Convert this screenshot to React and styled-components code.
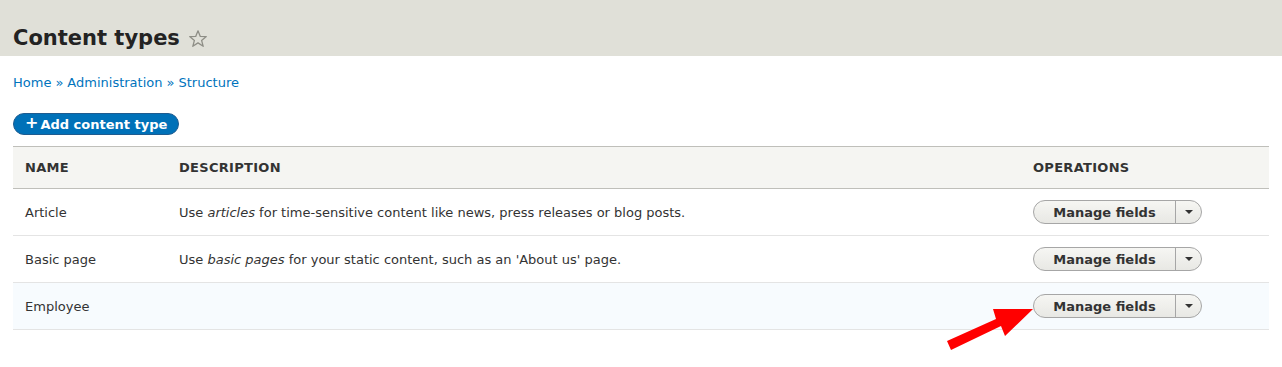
import React from 'react';
import styled, { createGlobalStyle } from 'styled-components';

const GlobalStyle = createGlobalStyle`
  body {
    margin: 0;
    background: #fff;
    font-family: "DejaVu Sans", "Liberation Sans", sans-serif;
    font-size: 13px;
    color: #333;
  }
`;

const Page = styled.div`
  position: relative;
  height: 367px;
  overflow: hidden;
`;

const Header = styled.div`
  background: #e0e0d8;
  height: 56px;
  padding: 0 0 0 13px;
  display: flex;
  align-items: flex-end;
`;

const Title = styled.h1`
  margin: 0 0 7px;
  font-size: 21px;
  font-weight: bold;
  line-height: 1;
  color: #232323;
  display: flex;
  align-items: center;
  gap: 8px;
`;

const Content = styled.div`
  padding: 18px 0 0 13px;
`;

const Breadcrumb = styled.nav`
  display: flex;
  gap: 4px;
  line-height: 17px;
  color: #0074bd;
`;

const Crumb = styled.a`
  color: #0074bd;
  text-decoration: none;
`;

const AddButton = styled.a`
  display: inline-flex;
  align-items: center;
  gap: 2px;
  margin-top: 22px;
  height: 22px;
  padding: 0 11px 0 11px;
  border-radius: 12px;
  background: #0071b8;
  border: 1px solid #1e5c90;
  color: #fff;
  font-weight: bold;
  font-size: 13px;
  text-decoration: none;
  box-sizing: border-box;
`;

const Plus = styled.span`
  font-size: 16px;
  line-height: 1;
  margin-top: -2px;
`;

const Table = styled.table`
  margin-top: 11px;
  width: calc(100% - 13px);
  border-collapse: collapse;
  border-top: 1px solid #bfbfba;
`;

const Th = styled.th`
  text-align: left;
  text-transform: uppercase;
  font-weight: bold;
  font-size: 13px;
  color: #333;
  background: #f5f5f2;
  height: 41px;
  padding: 0 12px;
  border-bottom: 1px solid #bfbfba;
  letter-spacing: 0.3px;
  width: ${p => p.$w || 'auto'};
`;

const Row = styled.tr`
  background: ${p => (p.$highlight ? '#f7fbfe' : '#fff')};
  border-bottom: 1px solid #e4e4e4;
`;

const Td = styled.td`
  height: 46px;
  padding: 0 12px;
  color: #333;
  vertical-align: middle;
`;

const SplitButton = styled.div`
  display: inline-flex;
  height: 24px;
  border: 1px solid #a6a6a6;
  border-radius: 12px;
  background: linear-gradient(#f6f6f3, #e8e8e4);
  box-sizing: border-box;
  overflow: hidden;
`;

const ButtonMain = styled.span`
  width: 141px;
  display: flex;
  align-items: center;
  justify-content: center;
  font-weight: bold;
  color: #333;
  border-right: 1px solid #a6a6a6;
`;

const ButtonToggle = styled.span`
  width: 25px;
  display: flex;
  align-items: center;
  justify-content: center;
`;

const Caret = styled.span`
  width: 0;
  height: 0;
  border-left: 4px solid transparent;
  border-right: 4px solid transparent;
  border-top: 4px solid #333;
`;

const Arrow = styled.svg`
  position: absolute;
  left: 940px;
  top: 300px;
`;

const rows = [
  { name: 'Article', pre: 'Use ', em: 'articles', post: ' for time-sensitive content like news, press releases or blog posts.' },
  { name: 'Basic page', pre: 'Use ', em: 'basic pages', post: " for your static content, such as an 'About us' page." },
  { name: 'Employee', highlight: true },
];

const Star = () => (
  <svg width="20" height="20" viewBox="0 0 20 20">
    <path
      d="M10 1.8 L12.3 7.4 L18.3 7.6 L13.6 11.4 L15.2 17.3 L10 13.9 L4.8 17.3 L6.4 11.4 L1.7 7.6 L7.7 7.4 Z"
      fill="none"
      stroke="#8e8e86"
      strokeWidth="1.3"
      strokeLinejoin="round"
    />
  </svg>
);

export default function App() {
  return (
    <Page>
      <GlobalStyle />
      <Header>
        <Title>
          Content types <Star />
        </Title>
      </Header>
      <Content>
        <Breadcrumb>
          <Crumb href="#">Home</Crumb>»<Crumb href="#">Administration</Crumb>»<Crumb href="#">Structure</Crumb>
        </Breadcrumb>
        <AddButton href="#">
          <Plus>+</Plus>Add content type
        </AddButton>
        <Table>
          <thead>
            <tr>
              <Th $w="130px">Name</Th>
              <Th>Description</Th>
              <Th $w="224px">Operations</Th>
            </tr>
          </thead>
          <tbody>
            {rows.map(r => (
              <Row key={r.name} $highlight={r.highlight}>
                <Td>{r.name}</Td>
                <Td>
                  {r.em && (
                    <>
                      {r.pre}
                      <em>{r.em}</em>
                      {r.post}
                    </>
                  )}
                </Td>
                <Td>
                  <SplitButton>
                    <ButtonMain>Manage fields</ButtonMain>
                    <ButtonToggle>
                      <Caret />
                    </ButtonToggle>
                  </SplitButton>
                </Td>
              </Row>
            ))}
          </tbody>
        </Table>
      </Content>
      <Arrow width="100" height="60" viewBox="940 300 100 60">
        <polygon points="947,341 996,319 993,309 1033,309 1005,336 1001,326 951,350" fill="#ff0000" />
      </Arrow>
    </Page>
  );
}
